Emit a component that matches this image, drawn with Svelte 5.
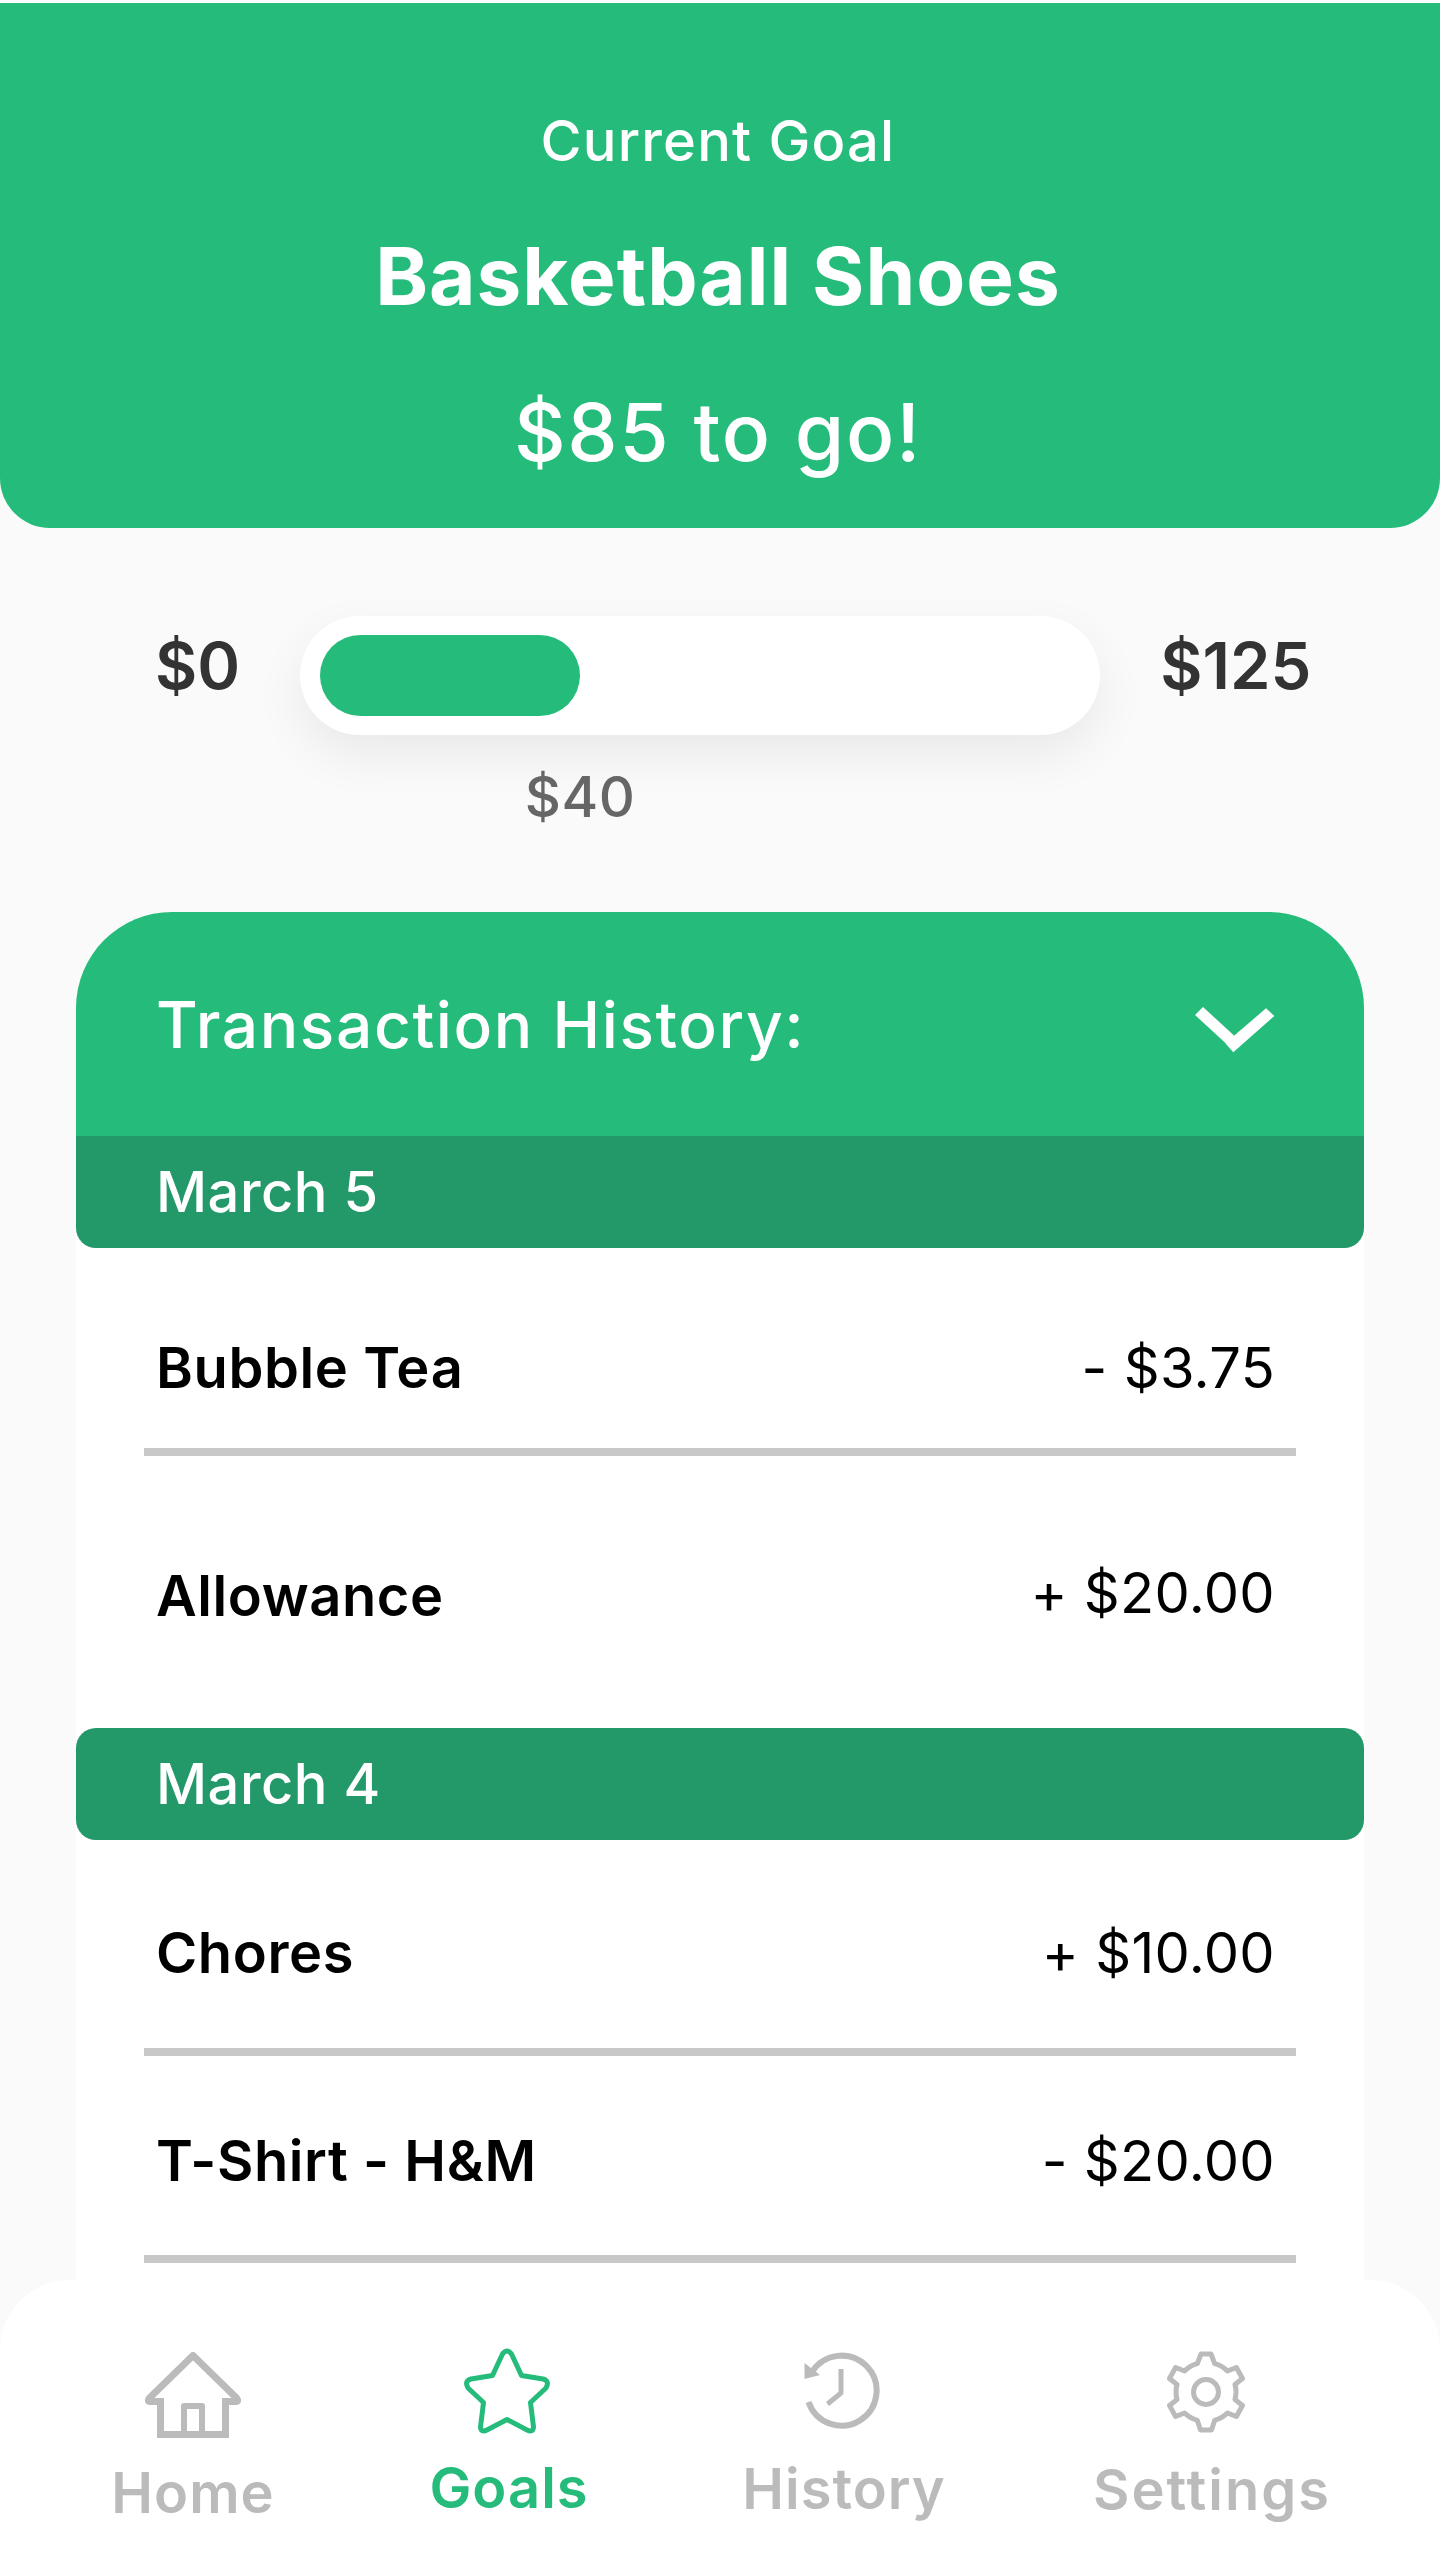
<script lang="ts">
    type Txn = { name: string; amount: string; kind: string };
    type Day = { date: string; first?: boolean; rows: Txn[] };

    const days: Day[] = [
        {
            date: 'March 5',
            first: true,
            rows: [
                { name: 'Bubble Tea', amount: '- $3.75', kind: 'tea' },
                { name: 'Allowance', amount: '+ $20.00', kind: 'allowance' }
            ]
        },
        {
            date: 'March 4',
            rows: [
                { name: 'Chores', amount: '+ $10.00', kind: 'chores' },
                { name: 'T-Shirt - H&M', amount: '- $20.00', kind: 'shirt' }
            ]
        }
    ];
</script>

<div class="screen">
    <header class="hero">
        <div class="hero-label">Current Goal</div>
        <h1 class="hero-title">Basketball Shoes</h1>
        <div class="hero-togo">$85 to go!</div>
    </header>

    <section class="progress">
        <span class="bound">$0</span>
        <div class="track">
            <div class="fill"></div>
        </div>
        <span class="bound">$125</span>
    </section>
    <div class="saved">$40</div>

    <section class="card">
        <div class="card-head">
            <span class="card-title">Transaction History:</span>
            <svg class="chevron" viewBox="0 0 80 46" width="80" height="46" aria-hidden="true">
                <path d="M0 8 L8 0 L39 28.5 L31 36.5 Z M71 1.3 L79.3 9 L38.3 45.3 L30.3 36.3 Z" fill="#fff" />
            </svg>
        </div>
        {#each days as day}
            <div class="day" class:first={day.first}>{day.date}</div>
            {#each day.rows as row}
                <div class="row {row.kind}">
                    <div class="row-inner">
                        <span class="name">{row.name}</span>
                        <span class="amount">{row.amount}</span>
                    </div>
                </div>
            {/each}
        {/each}
    </section>

    <nav class="tabs">
        <div class="tab home">
            <svg viewBox="0 0 96 86" width="96" height="86" fill="none" stroke="#bbb" aria-hidden="true">
                <path d="M15.5 49.5 H5 Q2 49.5 4.5 46 L48 3.5 L91.5 46 Q94 49.5 91 49.5 H80.5" stroke-width="7" stroke-linejoin="round" />
                <path d="M15.5 46 V82.5 H80.5 V46" stroke-width="7" />
                <path d="M39 80 V54 H57 V80" stroke-width="6" stroke-linejoin="round" />
            </svg>
            <span>Home</span>
        </div>
        <div class="tab goals">
            <svg viewBox="0 0 86 86" width="86" height="86" fill="none" stroke="#25bc7b" stroke-width="5" stroke-linejoin="round" aria-hidden="true">
                <path d="M38.5 6 Q43 0 47.5 6 L57.5 27.5 L79 31 Q86 33 82 40 L66.5 54.5 L69.5 79 Q69 85 63 82 L43 71.5 L23 82 Q17 85 16.5 79 L19.5 54.5 L4 40 Q0 33 7 31 L28.5 27.5 Z" />
            </svg>
            <span>Goals</span>
        </div>
        <div class="tab history">
            <svg viewBox="0 0 84 84" width="84" height="84" fill="none" stroke="#bbb" stroke-width="6" aria-hidden="true">
                <path d="M8.5 54 A35 35 0 1 0 12 24" />
                <path d="M4.5 15 V31 L20 27 Z" fill="#bbb" stroke="none" />
                <path d="M41 21 V45 L27.5 56" stroke-width="5" stroke-linejoin="round" />
            </svg>
            <span>History</span>
        </div>
        <div class="tab settings">
            <svg viewBox="0 0 78 82" width="78" height="82" fill="none" stroke="#bbb" stroke-width="5" stroke-linejoin="round" aria-hidden="true">
                <path d="M34 3 H44 L47.7 12.7 A29 29 0 0 1 60.4 20 L69.4 16.5 L75.5 27.5 L68 33.5 A29 29 0 0 1 68 48.5 L75.5 54.5 L69.4 65.5 L60.4 62 A29 29 0 0 1 47.7 69.3 L44.5 79 H33.5 L30.3 69.3 A29 29 0 0 1 17.6 62 L8.6 65.5 L2.5 54.5 L10 48.5 A29 29 0 0 1 10 33.5 L2.5 27.5 L8.6 16.5 L17.6 20 A29 29 0 0 1 30.3 12.7 Z" />
                <circle cx="39" cy="41" r="12.5" />
            </svg>
            <span>Settings</span>
        </div>
    </nav>
</div>

<style>
    :global(body) {
        margin: 0;
        background: #fafafa;
    }

    .screen {
        position: relative;
        height: 2560px;
        overflow: hidden;
        background: #fafafa;
        font-family: Inter, 'Noto Sans', sans-serif;
        border-top: 3px solid #fff;
        box-sizing: border-box;
    }

    .hero {
        height: 525px;
        box-sizing: border-box;
        padding: 108px 4px 0 0;
        background: #25bc7b;
        border-radius: 0 0 50px 50px;
        color: #fff;
        text-align: center;
    }

    .hero-label {
        font-size: 56px;
        line-height: 60px;
        font-weight: 500;
        letter-spacing: 1.2px;
    }

    .hero-title {
        margin: 65px 0 0;
        font-size: 80px;
        line-height: 80px;
        font-weight: 700;
        letter-spacing: 1px;
    }

    .hero-togo {
        margin-top: 76px;
        font-size: 80px;
        line-height: 80px;
        font-weight: 500;
        letter-spacing: 1.7px;
    }

    .progress {
        display: flex;
        align-items: center;
        gap: 60px;
        padding: 88px 0 0 155px;
    }

    .bound {
        font-size: 65px;
        font-weight: 600;
        color: #333;
        line-height: 70px;
        margin-top: -20px;
    }

    .track {
        width: 800px;
        height: 119px;
        box-sizing: border-box;
        padding: 19px 20px;
        border-radius: 60px;
        background: #fff;
        box-shadow: 0 20px 50px rgba(0, 0, 0, 0.07);
    }

    .fill {
        width: 260px;
        height: 81px;
        border-radius: 41px;
        background: #25bc7b;
    }

    .saved {
        margin-top: 32px;
        text-align: center;
        width: 1160px;
        font-size: 56px;
        line-height: 60px;
        font-weight: 500;
        letter-spacing: 0.5px;
        color: #666;
    }

    .card {
        margin: 85px 76px 0;
        padding-bottom: 60px;
        background: linear-gradient(transparent 100px, #fff 100px);
    }

    .card-head {
        display: flex;
        align-items: center;
        justify-content: space-between;
        height: 224px;
        box-sizing: border-box;
        padding: 0 89px 0 80px;
        background: #25bc7b;
        border-radius: 96px 96px 0 0;
    }

    .card-title {
        font-size: 64px;
        font-weight: 500;
        letter-spacing: 1.6px;
        color: #fff;
    }

    .chevron {
        margin-top: 12px;
    }

    .day {
        height: 112px;
        box-sizing: border-box;
        padding-left: 80px;
        background: #239868;
        border-radius: 20px;
        color: #fff;
        font-size: 56px;
        line-height: 112px;
        font-weight: 500;
        letter-spacing: 0.5px;
    }

    .day.first {
        border-radius: 0 0 20px 20px;
    }

    .row {
        padding: 0 68px;
    }

    .row-inner {
        display: flex;
        justify-content: space-between;
        align-items: flex-start;
        box-sizing: border-box;
        padding: 0 21px 0 12px;
        line-height: 60px;
        color: #000;
    }

    .tea .row-inner,
    .chores .row-inner,
    .shirt .row-inner {
        border-bottom: 8px solid #c8c8c8;
    }

    .tea .row-inner {
        height: 208px;
        padding-top: 90px;
    }

    .allowance .row-inner {
        height: 272px;
        padding-top: 110px;
    }

    .allowance .amount {
        margin-top: -3px;
    }

    .chores .row-inner {
        height: 216px;
        padding-top: 83px;
    }

    .shirt .row-inner {
        height: 207px;
        padding-top: 75px;
    }

    .name {
        font-size: 56px;
        font-weight: 600;
        letter-spacing: 0.6px;
    }

    .amount {
        font-size: 56px;
        font-weight: 400;
        letter-spacing: 0.3px;
    }

    .tabs {
        position: absolute;
        left: 0;
        right: 0;
        bottom: 0;
        height: 280px;
        box-sizing: border-box;
        display: flex;
        padding: 68px 0 0 116px;
        background: #fff;
        border-radius: 70px 70px 0 0;
    }

    .tab {
        display: flex;
        flex-direction: column;
        align-items: center;
        font-size: 56px;
        font-weight: 600;
        line-height: 60px;
        letter-spacing: 1px;
        white-space: nowrap;
        color: #bbb;
    }

    .tab svg {
        display: block;
        flex: none;
    }

    .home {
        width: 154px;
    }

    .home svg {
        margin: 4px 0 25px;
    }

    .goals {
        width: 150px;
        margin-left: 164px;
        color: #25bc7b;
    }

    .goals svg {
        margin: 0 4px 24px 0;
    }

    .history {
        width: 200px;
        margin-left: 160px;
    }

    .history svg {
        margin: 0 4px 27px 0;
    }

    .settings {
        width: 234px;
        margin-left: 151px;
        letter-spacing: 2px;
    }

    .settings svg {
        margin: 3px 12px 27px 0;
    }
</style>
